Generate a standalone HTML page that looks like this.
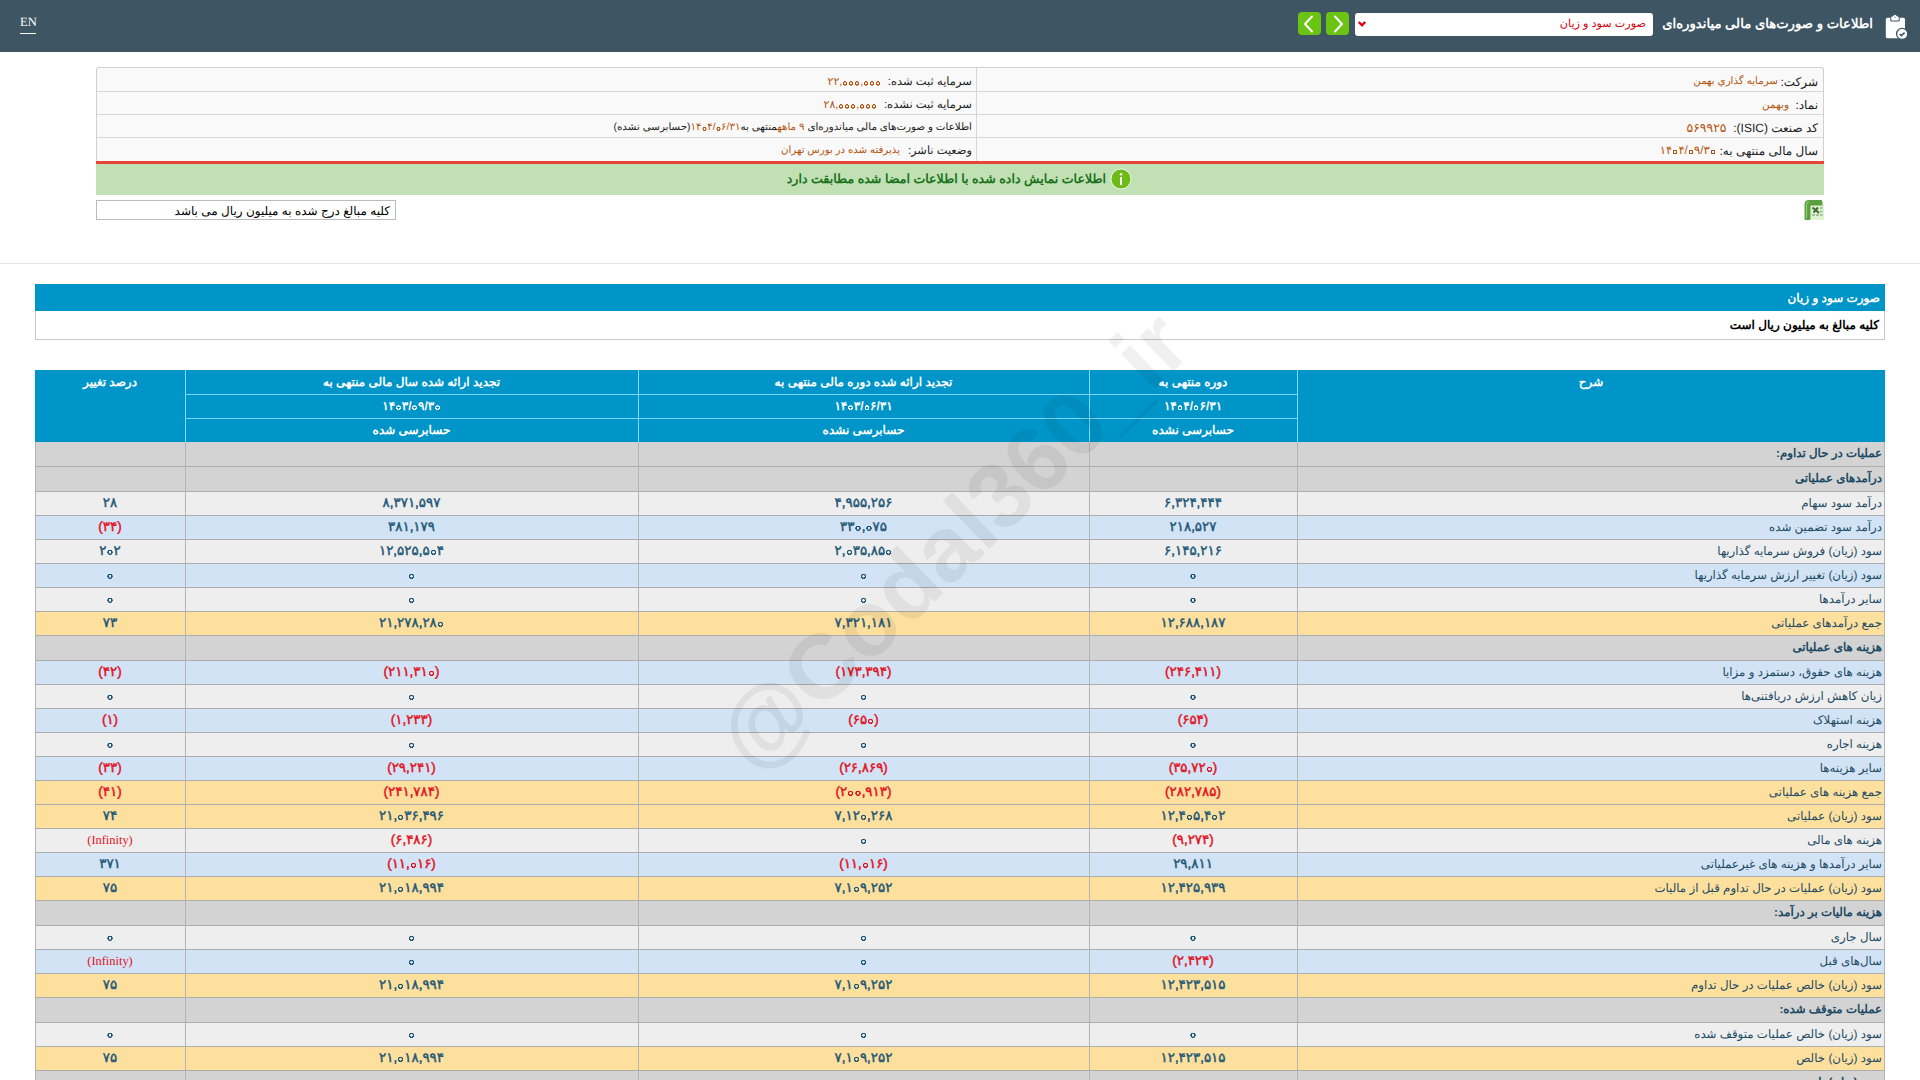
<!DOCTYPE html><html lang="fa" dir="rtl"><head><meta charset="utf-8"><style>
*{box-sizing:border-box;margin:0;padding:0}
html,body{width:1920px;height:1080px;overflow:hidden;background:#fff;font-family:"Liberation Sans",sans-serif;color:#000;text-rendering:geometricPrecision}
.a{position:absolute;white-space:nowrap}
.hdr{left:0;top:0;width:1920px;height:52px;background:#3e5563}
.btn{top:12px;width:23px;height:23px;background:#6bc312;border-radius:4px}
.info{left:96px;top:67px;width:1728px;height:94px;background:#f9f9f9;border:1px solid #d0d0d0;border-bottom:none;border-radius:3px 3px 0 0}
.il{position:absolute;left:0;width:1726px;height:1px;background:#d6d6d6}
.it{font-size:12px;color:#222;line-height:16px}
.br{color:#b4550f}
.row{left:35px;width:1850px;border-bottom:1px solid #adadad}
.vl{width:1px;background:#b4b4b4}
.lab{font-size:11.8px;color:#1d4a64;line-height:16px}
.num{font-size:13.4px;font-weight:normal;-webkit-text-stroke:0.45px currentColor;color:#1d5676;line-height:16px;text-align:center}
.zz{-webkit-text-fill-color:transparent;-webkit-text-stroke:0 transparent;background:radial-gradient(circle at 50% 62%,transparent 0.085em,currentColor 0.11em,currentColor 0.185em,transparent 0.21em)}
.inf{font-family:'Liberation Serif',serif;font-weight:normal;font-size:12.4px;-webkit-text-stroke:0 transparent}
.neg{color:#e3101d}
.hd{color:#fff;font-weight:bold;font-size:12px;line-height:16px;text-align:center}
</style></head><body>
<div class="a hdr"></div>
<div class="a" style="left:20px;top:14px;color:#fff;font-family:'Liberation Serif',serif;font-size:12.6px;line-height:16px;direction:ltr">EN</div>
<div class="a" style="left:20px;top:33px;width:16px;height:1px;background:#fff"></div>
<div class="a" style="right:47px;top:15px;color:#fff;font-weight:bold;font-size:13.2px;line-height:18px">اطلاعات و صورت‌های مالی میاندوره‌ای</div>
<svg class="a" style="left:1880px;top:10px" width="32" height="32" viewBox="0 0 32 32"><rect x="5.8" y="7.8" width="19.2" height="20.5" rx="1.6" fill="#fff"/><path d="M10.8 11 V7.5 Q10.8 6 12.5 6 L15 4 L17.5 6 Q19.2 6 19.2 7.5 V11 Z" fill="#fff" stroke="#3e5563" stroke-width="1"/><path d="M14 7.6 L15 6.4 L16 7.6 Z" fill="#3e5563"/><circle cx="22.2" cy="23.9" r="5.6" fill="#fff" stroke="#3e5563" stroke-width="1.3"/><path d="M19.6 24 L21.4 25.6 L24.6 22.6" fill="none" stroke="#3e5563" stroke-width="1.6"/></svg>
<div class="a" style="left:1355px;top:13px;width:298px;height:23px;background:#fff;border-radius:3px"></div>
<div class="a" style="right:274px;top:15px;color:#d2000d;font-size:11.2px;line-height:18px">صورت سود و زیان</div>
<svg class="a" style="left:1357px;top:19px" width="12" height="10" viewBox="0 0 12 10"><path d="M1.8 3 L5 6.3 L8.2 3" fill="none" stroke="#e0000f" stroke-width="2.4"/></svg>
<div class="a btn" style="left:1298px"></div><div class="a btn" style="left:1326px"></div>
<svg class="a" style="left:1298px;top:12px" width="23" height="23" viewBox="0 0 23 23"><path d="M14 4.5 L7 12 L14 19.5" fill="none" stroke="#fff" stroke-width="2" stroke-linecap="round" stroke-linejoin="round"/></svg>
<svg class="a" style="left:1326px;top:12px" width="23" height="23" viewBox="0 0 23 23"><path d="M9 4.5 L16 12 L9 19.5" fill="none" stroke="#fff" stroke-width="2" stroke-linecap="round" stroke-linejoin="round"/></svg>
<div class="a info">
<div class="il" style="top:23px"></div>
<div class="il" style="top:46px"></div>
<div class="il" style="top:69px"></div>
<div class="a" style="left:879px;top:0;width:1px;height:93px;background:#d6d6d6"></div>
</div>
<div class="a it" style="right:102px;top:74px;">شرکت:</div>
<div class="a it" style="right:142px;top:74px;color:#b4550f;font-size:10.3px">سرمایه گذاري بهمن</div>
<div class="a it" style="right:102px;top:97px;">نماد:</div>
<div class="a it" style="right:131px;top:97px;color:#b4550f;font-size:10.5px">وبهمن</div>
<div class="a it" style="right:102px;top:120px;">کد صنعت (ISIC):</div>
<div class="a it" style="right:193.5px;top:120px;color:#b4550f;font-size:12.4px">۵۶۹۹۲۵</div>
<div class="a it" style="right:102px;top:143px;">سال مالی منتهی به:</div>
<div class="a it" style="right:204px;top:143px;color:#b4550f;font-size:11.6px">۱۴<span class="zz">۰</span>۴/<span class="zz">۰</span>۹/۳<span class="zz">۰</span></div>
<div class="a it" style="right:948px;top:74px;font-size:11.5px">سرمایه ثبت شده:</div>
<div class="a it" style="right:1039px;top:74px;color:#b4550f;font-size:11px">۲۲,<span class="zz">۰</span><span class="zz">۰</span><span class="zz">۰</span>,<span class="zz">۰</span><span class="zz">۰</span><span class="zz">۰</span></div>
<div class="a it" style="right:948px;top:97px;font-size:11.5px">سرمایه ثبت نشده:</div>
<div class="a it" style="right:1043px;top:97px;color:#b4550f;font-size:11px">۲۸,<span class="zz">۰</span><span class="zz">۰</span><span class="zz">۰</span>,<span class="zz">۰</span><span class="zz">۰</span><span class="zz">۰</span></div>
<div class="a it" style="right:948px;top:120px;font-size:10.3px">اطلاعات و صورت‌های مالی میاندوره‌ای <span class="br">۹ ماهه</span>منتهی به<span class="br">۱۴<span class="zz">۰</span>۴/<span class="zz">۰</span>۶/۳۱</span>(حسابرسی نشده)</div>
<div class="a it" style="right:948px;top:143px;font-size:11.4px">وضعیت ناشر:</div>
<div class="a it" style="right:1020px;top:143px;color:#b4550f;font-size:10.2px">پذیرفته شده در بورس تهران</div>
<div class="a" style="left:96px;top:161px;width:1728px;height:3px;background:#e8433b"></div>
<div class="a" style="left:96px;top:164px;width:1728px;height:31px;background:#c1e1b4"></div>
<div class="a" style="right:814px;top:170px;color:#1b721f;font-weight:bold;font-size:12.6px;line-height:18px">اطلاعات نمایش داده شده با اطلاعات امضا شده مطابقت دارد</div>
<svg class="a" style="left:1110px;top:168px" width="22" height="22" viewBox="0 0 22 22"><circle cx="11" cy="11" r="10" fill="#6cbb17" stroke="#fff" stroke-width="0.8"/><rect x="10" y="9" width="2" height="8" fill="#fff"/><circle cx="11" cy="6.3" r="1.2" fill="#fff"/></svg>
<svg class="a" style="left:1804px;top:200px" width="20" height="20" viewBox="0 0 20 20"><rect x="5" y="4" width="15" height="16" fill="#dcf5cf"/><path d="M0.5 18.5 V4.5 Q0.5 0 5 0 H17 Q18.5 0 18.5 2 V5.5 H6.5 V18.5 Q6.5 20 4.5 20 H2 Q0.5 20 0.5 18.5Z" fill="#5aa042"/><path d="M2.5 18 V5 Q2.5 2 5 2" fill="none" stroke="#8fd070" stroke-width="1.2"/><path d="M8.5 7.5 L15 13 M14 7.5 L9.5 12.5" stroke="#466f3a" stroke-width="2.2"/><rect x="8" y="14" width="3" height="2" fill="#a9bf9f"/><rect x="12" y="14" width="3" height="2" fill="#a9bf9f"/><rect x="16" y="7" width="2.5" height="2" fill="#a9bf9f"/><rect x="16" y="10.5" width="2.5" height="2" fill="#a9bf9f"/><rect x="16" y="14" width="2.5" height="2" fill="#a9bf9f"/></svg>
<div class="a" style="left:96px;top:200px;width:300px;height:20px;border:1px solid #bbb;background:#fff"></div>
<div class="a it" style="right:1530px;top:203px;color:#000">کلیه مبالغ درج شده به میلیون ریال می باشد</div>
<div class="a" style="left:0;top:263px;width:1920px;height:1px;background:#e8e8e8"></div>
<div class="a" style="left:35px;top:284px;width:1850px;height:27px;background:#0095c8"></div>
<div class="a" style="right:40px;top:290px;color:#fff;font-weight:bold;font-size:12px;line-height:16px">صورت سود و زیان</div>
<div class="a" style="left:35px;top:311px;width:1850px;height:29px;border:1px solid #c8c8c8;border-top:none;background:#fff"></div>
<div class="a" style="right:41px;top:317px;color:#000;font-weight:bold;font-size:12px;line-height:16px">کلیه مبالغ به میلیون ریال است</div>
<div class="a" style="left:35px;top:370px;width:1850px;height:72px;background:#0095c8"></div>
<div class="a" style="left:185px;top:370px;width:1px;height:72px;background:#7fd6f5"></div>
<div class="a" style="left:638px;top:370px;width:1px;height:72px;background:#7fd6f5"></div>
<div class="a" style="left:1089px;top:370px;width:1px;height:72px;background:#7fd6f5"></div>
<div class="a" style="left:1297px;top:370px;width:1px;height:72px;background:#7fd6f5"></div>
<div class="a" style="left:185px;top:394px;width:1112px;height:1px;background:#7fd6f5"></div>
<div class="a" style="left:185px;top:418px;width:1112px;height:1px;background:#7fd6f5"></div>
<div class="a hd" style="left:1297px;width:588px;top:374px">شرح</div>
<div class="a hd" style="left:35px;width:150px;top:374px">درصد تغییر</div>
<div class="a hd" style="left:185px;width:453px;top:374px">تجدید ارائه شده سال مالی منتهی به</div>
<div class="a hd" style="left:638px;width:451px;top:374px">تجدید ارائه شده دوره مالی منتهی به</div>
<div class="a hd" style="left:1089px;width:208px;top:374px">دوره منتهی به</div>
<div class="a hd" style="left:185px;width:453px;top:398px">۱۴<span class="zz">۰</span>۳/<span class="zz">۰</span>۹/۳<span class="zz">۰</span></div>
<div class="a hd" style="left:638px;width:451px;top:398px">۱۴<span class="zz">۰</span>۳/<span class="zz">۰</span>۶/۳۱</div>
<div class="a hd" style="left:1089px;width:208px;top:398px">۱۴<span class="zz">۰</span>۴/<span class="zz">۰</span>۶/۳۱</div>
<div class="a hd" style="left:185px;width:453px;top:422px">حسابرسی شده</div>
<div class="a hd" style="left:638px;width:451px;top:422px">حسابرسی نشده</div>
<div class="a hd" style="left:1089px;width:208px;top:422px">حسابرسی نشده</div>
<div class="a row" style="top:442px;height:25px;background:#d3d3d3"></div>
<div class="a lab" style="right:38px;top:445px;font-weight:bold">عملیات در حال تداوم:</div>
<div class="a row" style="top:467px;height:25px;background:#d3d3d3"></div>
<div class="a lab" style="right:38px;top:470px;font-weight:bold">درآمدهای عملیاتی</div>
<div class="a row" style="top:492px;height:24px;background:#eeeeee"></div>
<div class="a lab" style="right:38px;top:495px">درآمد سود سهام</div>
<div class="a num" style="left:1089px;width:208px;top:495px">۶,۳۲۴,۴۴۴</div>
<div class="a num" style="left:638px;width:451px;top:495px">۴,۹۵۵,۲۵۶</div>
<div class="a num" style="left:185px;width:453px;top:495px">۸,۳۷۱,۵۹۷</div>
<div class="a num" style="left:35px;width:150px;top:495px">۲۸</div>
<div class="a row" style="top:516px;height:24px;background:#d1e3f4"></div>
<div class="a lab" style="right:38px;top:519px">درآمد سود تضمین شده</div>
<div class="a num" style="left:1089px;width:208px;top:519px">۲۱۸,۵۲۷</div>
<div class="a num" style="left:638px;width:451px;top:519px">۳۳<span class="zz">۰</span>,<span class="zz">۰</span>۷۵</div>
<div class="a num" style="left:185px;width:453px;top:519px">۳۸۱,۱۷۹</div>
<div class="a num neg" style="left:35px;width:150px;top:519px">(۳۴)</div>
<div class="a row" style="top:540px;height:24px;background:#eeeeee"></div>
<div class="a lab" style="right:38px;top:543px">سود (زیان) فروش سرمایه گذاریها</div>
<div class="a num" style="left:1089px;width:208px;top:543px">۶,۱۴۵,۲۱۶</div>
<div class="a num" style="left:638px;width:451px;top:543px">۲,<span class="zz">۰</span>۳۵,۸۵<span class="zz">۰</span></div>
<div class="a num" style="left:185px;width:453px;top:543px">۱۲,۵۲۵,۵<span class="zz">۰</span>۴</div>
<div class="a num" style="left:35px;width:150px;top:543px">۲<span class="zz">۰</span>۲</div>
<div class="a row" style="top:564px;height:24px;background:#d1e3f4"></div>
<div class="a lab" style="right:38px;top:567px">سود (زیان) تغییر ارزش سرمایه گذاریها</div>
<div class="a num" style="left:1089px;width:208px;top:567px"><span class="zz">۰</span></div>
<div class="a num" style="left:638px;width:451px;top:567px"><span class="zz">۰</span></div>
<div class="a num" style="left:185px;width:453px;top:567px"><span class="zz">۰</span></div>
<div class="a num" style="left:35px;width:150px;top:567px"><span class="zz">۰</span></div>
<div class="a row" style="top:588px;height:24px;background:#eeeeee"></div>
<div class="a lab" style="right:38px;top:591px">سایر درآمدها</div>
<div class="a num" style="left:1089px;width:208px;top:591px"><span class="zz">۰</span></div>
<div class="a num" style="left:638px;width:451px;top:591px"><span class="zz">۰</span></div>
<div class="a num" style="left:185px;width:453px;top:591px"><span class="zz">۰</span></div>
<div class="a num" style="left:35px;width:150px;top:591px"><span class="zz">۰</span></div>
<div class="a row" style="top:612px;height:24px;background:#fde09e"></div>
<div class="a lab" style="right:38px;top:615px">جمع درآمدهای عملیاتی</div>
<div class="a num" style="left:1089px;width:208px;top:615px">۱۲,۶۸۸,۱۸۷</div>
<div class="a num" style="left:638px;width:451px;top:615px">۷,۳۲۱,۱۸۱</div>
<div class="a num" style="left:185px;width:453px;top:615px">۲۱,۲۷۸,۲۸<span class="zz">۰</span></div>
<div class="a num" style="left:35px;width:150px;top:615px">۷۳</div>
<div class="a row" style="top:636px;height:25px;background:#d3d3d3"></div>
<div class="a lab" style="right:38px;top:639px;font-weight:bold">هزینه های عملیاتی</div>
<div class="a row" style="top:661px;height:24px;background:#d1e3f4"></div>
<div class="a lab" style="right:38px;top:664px">هزینه های حقوق، دستمزد و مزایا</div>
<div class="a num neg" style="left:1089px;width:208px;top:664px">(۲۴۶,۴۱۱)</div>
<div class="a num neg" style="left:638px;width:451px;top:664px">(۱۷۳,۳۹۴)</div>
<div class="a num neg" style="left:185px;width:453px;top:664px">(۲۱۱,۳۱<span class="zz">۰</span>)</div>
<div class="a num neg" style="left:35px;width:150px;top:664px">(۴۲)</div>
<div class="a row" style="top:685px;height:24px;background:#eeeeee"></div>
<div class="a lab" style="right:38px;top:688px">زیان کاهش ارزش دریافتنی‌ها</div>
<div class="a num" style="left:1089px;width:208px;top:688px"><span class="zz">۰</span></div>
<div class="a num" style="left:638px;width:451px;top:688px"><span class="zz">۰</span></div>
<div class="a num" style="left:185px;width:453px;top:688px"><span class="zz">۰</span></div>
<div class="a num" style="left:35px;width:150px;top:688px"><span class="zz">۰</span></div>
<div class="a row" style="top:709px;height:24px;background:#d1e3f4"></div>
<div class="a lab" style="right:38px;top:712px">هزینه استهلاک</div>
<div class="a num neg" style="left:1089px;width:208px;top:712px">(۶۵۴)</div>
<div class="a num neg" style="left:638px;width:451px;top:712px">(۶۵<span class="zz">۰</span>)</div>
<div class="a num neg" style="left:185px;width:453px;top:712px">(۱,۲۳۳)</div>
<div class="a num neg" style="left:35px;width:150px;top:712px">(۱)</div>
<div class="a row" style="top:733px;height:24px;background:#eeeeee"></div>
<div class="a lab" style="right:38px;top:736px">هزینه اجاره</div>
<div class="a num" style="left:1089px;width:208px;top:736px"><span class="zz">۰</span></div>
<div class="a num" style="left:638px;width:451px;top:736px"><span class="zz">۰</span></div>
<div class="a num" style="left:185px;width:453px;top:736px"><span class="zz">۰</span></div>
<div class="a num" style="left:35px;width:150px;top:736px"><span class="zz">۰</span></div>
<div class="a row" style="top:757px;height:24px;background:#d1e3f4"></div>
<div class="a lab" style="right:38px;top:760px">سایر هزینه‌ها</div>
<div class="a num neg" style="left:1089px;width:208px;top:760px">(۳۵,۷۲<span class="zz">۰</span>)</div>
<div class="a num neg" style="left:638px;width:451px;top:760px">(۲۶,۸۶۹)</div>
<div class="a num neg" style="left:185px;width:453px;top:760px">(۲۹,۲۴۱)</div>
<div class="a num neg" style="left:35px;width:150px;top:760px">(۳۳)</div>
<div class="a row" style="top:781px;height:24px;background:#fde09e"></div>
<div class="a lab" style="right:38px;top:784px">جمع هزینه های عملیاتی</div>
<div class="a num neg" style="left:1089px;width:208px;top:784px">(۲۸۲,۷۸۵)</div>
<div class="a num neg" style="left:638px;width:451px;top:784px">(۲<span class="zz">۰</span><span class="zz">۰</span>,۹۱۳)</div>
<div class="a num neg" style="left:185px;width:453px;top:784px">(۲۴۱,۷۸۴)</div>
<div class="a num neg" style="left:35px;width:150px;top:784px">(۴۱)</div>
<div class="a row" style="top:805px;height:24px;background:#fde09e"></div>
<div class="a lab" style="right:38px;top:808px">سود (زیان) عملیاتی</div>
<div class="a num" style="left:1089px;width:208px;top:808px">۱۲,۴<span class="zz">۰</span>۵,۴<span class="zz">۰</span>۲</div>
<div class="a num" style="left:638px;width:451px;top:808px">۷,۱۲<span class="zz">۰</span>,۲۶۸</div>
<div class="a num" style="left:185px;width:453px;top:808px">۲۱,<span class="zz">۰</span>۳۶,۴۹۶</div>
<div class="a num" style="left:35px;width:150px;top:808px">۷۴</div>
<div class="a row" style="top:829px;height:24px;background:#eeeeee"></div>
<div class="a lab" style="right:38px;top:832px">هزینه های مالی</div>
<div class="a num neg" style="left:1089px;width:208px;top:832px">(۹,۲۷۴)</div>
<div class="a num" style="left:638px;width:451px;top:832px"><span class="zz">۰</span></div>
<div class="a num neg" style="left:185px;width:453px;top:832px">(۶,۴۸۶)</div>
<div class="a num neg inf" style="left:35px;width:150px;top:832px">(Infinity)</div>
<div class="a row" style="top:853px;height:24px;background:#d1e3f4"></div>
<div class="a lab" style="right:38px;top:856px">سایر درآمدها و هزینه های غیرعملیاتی</div>
<div class="a num" style="left:1089px;width:208px;top:856px">۲۹,۸۱۱</div>
<div class="a num neg" style="left:638px;width:451px;top:856px">(۱۱,<span class="zz">۰</span>۱۶)</div>
<div class="a num neg" style="left:185px;width:453px;top:856px">(۱۱,<span class="zz">۰</span>۱۶)</div>
<div class="a num" style="left:35px;width:150px;top:856px">۳۷۱</div>
<div class="a row" style="top:877px;height:24px;background:#fde09e"></div>
<div class="a lab" style="right:38px;top:880px">سود (زیان) عملیات در حال تداوم قبل از مالیات</div>
<div class="a num" style="left:1089px;width:208px;top:880px">۱۲,۴۲۵,۹۳۹</div>
<div class="a num" style="left:638px;width:451px;top:880px">۷,۱<span class="zz">۰</span>۹,۲۵۲</div>
<div class="a num" style="left:185px;width:453px;top:880px">۲۱,<span class="zz">۰</span>۱۸,۹۹۴</div>
<div class="a num" style="left:35px;width:150px;top:880px">۷۵</div>
<div class="a row" style="top:901px;height:25px;background:#d3d3d3"></div>
<div class="a lab" style="right:38px;top:904px;font-weight:bold">هزینه مالیات بر درآمد:</div>
<div class="a row" style="top:926px;height:24px;background:#eeeeee"></div>
<div class="a lab" style="right:38px;top:929px">سال جاری</div>
<div class="a num" style="left:1089px;width:208px;top:929px"><span class="zz">۰</span></div>
<div class="a num" style="left:638px;width:451px;top:929px"><span class="zz">۰</span></div>
<div class="a num" style="left:185px;width:453px;top:929px"><span class="zz">۰</span></div>
<div class="a num" style="left:35px;width:150px;top:929px"><span class="zz">۰</span></div>
<div class="a row" style="top:950px;height:24px;background:#d1e3f4"></div>
<div class="a lab" style="right:38px;top:953px">سال‌های قبل</div>
<div class="a num neg" style="left:1089px;width:208px;top:953px">(۲,۴۲۴)</div>
<div class="a num" style="left:638px;width:451px;top:953px"><span class="zz">۰</span></div>
<div class="a num" style="left:185px;width:453px;top:953px"><span class="zz">۰</span></div>
<div class="a num neg inf" style="left:35px;width:150px;top:953px">(Infinity)</div>
<div class="a row" style="top:974px;height:24px;background:#fde09e"></div>
<div class="a lab" style="right:38px;top:977px">سود (زیان) خالص عملیات در حال تداوم</div>
<div class="a num" style="left:1089px;width:208px;top:977px">۱۲,۴۲۳,۵۱۵</div>
<div class="a num" style="left:638px;width:451px;top:977px">۷,۱<span class="zz">۰</span>۹,۲۵۲</div>
<div class="a num" style="left:185px;width:453px;top:977px">۲۱,<span class="zz">۰</span>۱۸,۹۹۴</div>
<div class="a num" style="left:35px;width:150px;top:977px">۷۵</div>
<div class="a row" style="top:998px;height:25px;background:#d3d3d3"></div>
<div class="a lab" style="right:38px;top:1001px;font-weight:bold">عملیات متوقف شده:</div>
<div class="a row" style="top:1023px;height:24px;background:#eeeeee"></div>
<div class="a lab" style="right:38px;top:1026px">سود (زیان) خالص عملیات متوقف شده</div>
<div class="a num" style="left:1089px;width:208px;top:1026px"><span class="zz">۰</span></div>
<div class="a num" style="left:638px;width:451px;top:1026px"><span class="zz">۰</span></div>
<div class="a num" style="left:185px;width:453px;top:1026px"><span class="zz">۰</span></div>
<div class="a num" style="left:35px;width:150px;top:1026px"><span class="zz">۰</span></div>
<div class="a row" style="top:1047px;height:24px;background:#fde09e"></div>
<div class="a lab" style="right:38px;top:1050px">سود (زیان) خالص</div>
<div class="a num" style="left:1089px;width:208px;top:1050px">۱۲,۴۲۳,۵۱۵</div>
<div class="a num" style="left:638px;width:451px;top:1050px">۷,۱<span class="zz">۰</span>۹,۲۵۲</div>
<div class="a num" style="left:185px;width:453px;top:1050px">۲۱,<span class="zz">۰</span>۱۸,۹۹۴</div>
<div class="a num" style="left:35px;width:150px;top:1050px">۷۵</div>
<div class="a row" style="top:1071px;height:25px;background:#d3d3d3"></div>
<div class="a lab" style="right:38px;top:1074px;font-weight:bold">سود (زیان) پایه هر سهم</div>
<div class="a vl" style="left:35px;top:442px;height:638px"></div>
<div class="a vl" style="left:185px;top:442px;height:638px"></div>
<div class="a vl" style="left:638px;top:442px;height:638px"></div>
<div class="a vl" style="left:1089px;top:442px;height:638px"></div>
<div class="a vl" style="left:1297px;top:442px;height:638px"></div>
<div class="a vl" style="left:1884px;top:442px;height:638px"></div>
<div class="a" style="left:953px;top:541px;transform:translate(-50%,-50%) rotate(-44deg);font-family:'Liberation Sans',sans-serif;font-weight:bold;font-size:92px;line-height:92px;color:rgba(0,0,0,0.06);direction:ltr">@Codal360_ir</div>
</body></html>
